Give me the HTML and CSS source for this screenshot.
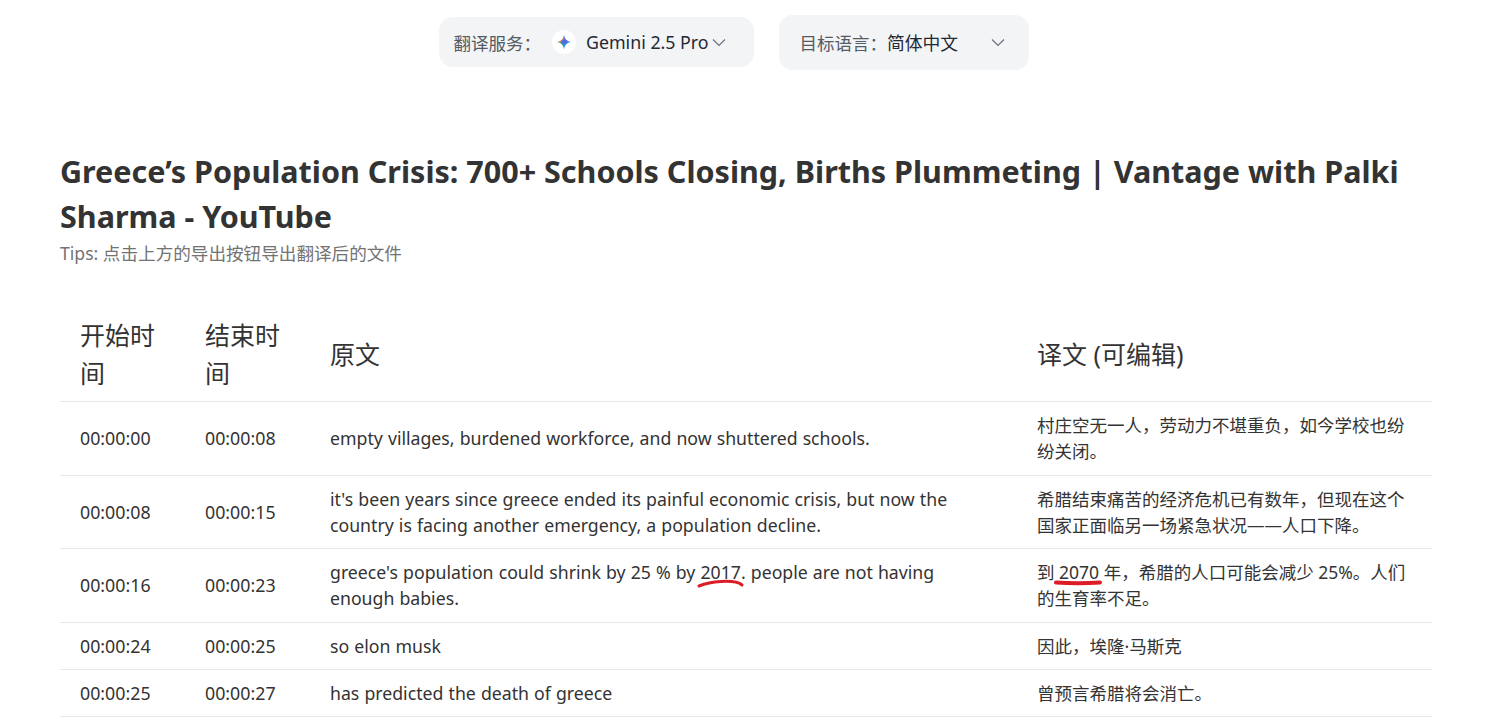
FILE: index.html
```html
<!DOCTYPE html>
<html lang="zh">
<head>
<meta charset="utf-8">
<title>Translate</title>
<link rel="stylesheet" href="styles.css">
</head>
<body>
<div class="toolbar">
  <div class="select service">
    <span class="label">翻译服务：</span>
    <span class="logo"><svg viewBox="0 0 20 20" width="20" height="20"><defs><clipPath id="star"><path d="M10 2.5C10.6 7 13 9.4 17.5 10 13 10.6 10.6 13 10 17.5 9.4 13 7 10.6 2.5 10 7 9.4 9.4 7 10 2.5Z"/></clipPath></defs><g clip-path="url(#star)"><rect x="0" y="0" width="10" height="10" fill="#e8803f"/><rect x="10" y="0" width="10" height="10" fill="#5b6fe6"/><rect x="10" y="10" width="10" height="10" fill="#2f9be8"/><rect x="0" y="10" width="10" height="10" fill="#3fae62"/><circle cx="10" cy="10" r="2.6" fill="#4f6be8"/></g></svg></span>
    <span class="value">Gemini 2.5 Pro</span>
    <svg class="chev" viewBox="0 0 14 14" width="14" height="14"><path d="M1 4.5 7 10.5l6-6" fill="none" stroke="#6b7280" stroke-width="1.2"/></svg>
  </div>
  <div class="select language">
    <span class="label">目标语言：</span>
    <span class="value grow">简体中文</span>
    <svg class="chev" viewBox="0 0 14 14" width="14" height="14"><path d="M1 4.5 7 10.5l6-6" fill="none" stroke="#6b7280" stroke-width="1.2"/></svg>
  </div>
</div>
<main class="content">
  <h1 class="title">Greece’s Population Crisis: 700+ Schools Closing, Births Plummeting | Vantage with Palki Sharma - YouTube</h1>
  <p class="tips">Tips: 点击上方的导出按钮导出翻译后的文件</p>
  <table class="subs">
    <colgroup><col class="c1"><col class="c2"><col class="c3"><col class="c4"></colgroup>
    <thead>
      <tr><th>开始时间</th><th>结束时间</th><th>原文</th><th>译文 (可编辑)</th></tr>
    </thead>
    <tbody>
      <tr><td class="time">00:00:00</td><td class="time">00:00:08</td><td class="src">empty villages, burdened workforce, and now shuttered schools.</td><td>村庄空无一人，劳动力不堪重负，如今学校也纷纷关闭。</td></tr>
      <tr><td class="time">00:00:08</td><td class="time">00:00:15</td><td class="src">it's been years since greece ended its painful economic crisis, but now the country is facing another emergency, a population decline.</td><td>希腊结束痛苦的经济危机已有数年，但现在这个国家正面临另一场紧急状况——人口下降。</td></tr>
      <tr><td class="time">00:00:16</td><td class="time">00:00:23</td><td class="src">greece's population could shrink by 25 % by <span class="mark">2017<svg class="ink" viewBox="0 0 50 12" width="50" height="12"><path d="M4 9C10 6.5 16 5 26 4.5 35 4 43 4.5 47 8" fill="none" stroke="#dc1c26" stroke-width="3" stroke-linecap="round"/></svg></span>. people are not having enough babies.</td><td>到 <span class="mark">2070<svg class="ink" viewBox="0 0 50 12" width="50" height="12"><path d="M2 5.5C14 6.2 34 6.2 46 5.5" fill="none" stroke="#dc1c26" stroke-width="4" stroke-linecap="round"/></svg></span> 年，希腊的人口可能会减少 25%。人们的生育率不足。</td></tr>
      <tr><td class="time">00:00:24</td><td class="time">00:00:25</td><td class="src">so elon musk</td><td>因此，埃隆·马斯克</td></tr>
      <tr><td class="time">00:00:25</td><td class="time">00:00:27</td><td class="src">has predicted the death of greece</td><td>曾预言希腊将会消亡。</td></tr>
    </tbody>
  </table>
</main>
</body>
</html>
```
FILE: styles.css
```css
* { box-sizing: border-box; }
html, body { margin: 0; height: 100%; overflow: hidden; background: #fff; }
body {
  font-family: "Noto Sans", "Noto Sans CJK SC", sans-serif;
  color: #333;
}
.toolbar {
  display: flex;
  justify-content: center;
  align-items: center;
  gap: 25px;
  height: 84px;
  padding-right: 44px;
}
.select {
  display: flex;
  align-items: center;
  background: #f3f4f6;
  border-radius: 14px;
  font-size: 17.5px;
}
.service { width: 315px; height: 50px; padding: 0 14px 0 15px; }
.language { width: 250px; height: 55px; padding: 0 24px 0 21px; }
.label { color: #555b63; white-space: nowrap; }
.value { color: #1f2937; white-space: nowrap; font-size: 17.8px; }
.grow { flex: 1; }
.logo {
  width: 24px; height: 24px; margin: 0 10px 0 11px;
  border-radius: 50%; background: #fff;
  display: flex; align-items: center; justify-content: center;
}
.chev { flex: none; margin-left: 3px; }
.content { padding: 0 79px 0 60px; }
.title {
  margin: 65px 0 0;
  font-size: 30.5px;
  line-height: 45px;
  font-weight: 700;
  color: #333;
}
.tips {
  margin: 0;
  font-size: 17.6px;
  line-height: 28px;
  color: #737373;
}
.subs {
  width: 100%;
  margin-top: 49px;
  border-collapse: collapse;
  table-layout: fixed;
  font-size: 17.5px;
  line-height: 26.25px;
}
.c1 { width: 125px; }
.c2 { width: 125px; }
.c3 { width: 707px; }
.subs th {
  font-size: 25px;
  line-height: 38px;
  font-weight: 400;
  text-align: left;
  padding: 0 20px 9px;
  color: #333;
}
.subs td {
  padding: 10px 20px;
  border-top: 1px solid #e8e8e8;
  color: #333;
}
.subs td.time { font-size: 17.8px; }
.subs td.src { font-size: 17.7px; word-spacing: 0.5px; }
.subs tbody tr:last-child td { border-bottom: 1px solid #e8e8e8; }
.mark { position: relative; }
.ink { position: absolute; left: -5px; bottom: -5px; pointer-events: none; }
```
